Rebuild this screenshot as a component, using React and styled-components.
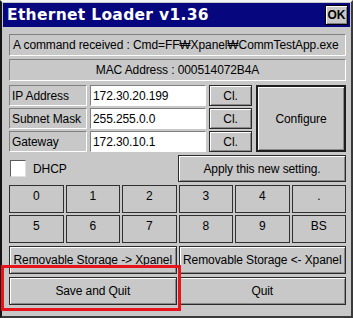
import React from 'react';
import styled, { createGlobalStyle } from 'styled-components';

const GlobalStyle = createGlobalStyle`
  html, body {
    margin: 0;
    padding: 0;
    background: #ffffff;
  }
  body {
    font-family: "Liberation Sans", Arial, sans-serif;
  }
`;

const KEYS = ['0', '1', '2', '3', '4', '.', '5', '6', '7', '8', '9', 'BS'];

const FIELDS = [
  { label: 'IP Address', value: '172.30.20.199' },
  { label: 'Subnet Mask', value: '255.255.0.0' },
  { label: 'Gateway', value: '172.30.10.1' },
];

const App = () => (
  <>
    <GlobalStyle />
    <Window>
      <TitleBar>
        <Title>Ethernet Loader v1.36</Title>
        <OkButton>OK</OkButton>
      </TitleBar>
      <Body>
        <InfoBox>A command received : Cmd=FF₩Xpanel₩CommTestApp.exe</InfoBox>
        <InfoBox center>MAC Address : 000514072B4A</InfoBox>

        <NetGrid>
          {FIELDS.map((f, i) => (
            <React.Fragment key={f.label}>
              <Label style={{ gridRow: i + 1 }}>{f.label}</Label>
              <Input style={{ gridRow: i + 1 }}>{f.value}</Input>
              <ClearButton style={{ gridRow: i + 1 }}>Cl.</ClearButton>
            </React.Fragment>
          ))}
          <ConfigureButton>Configure</ConfigureButton>
        </NetGrid>

        <DhcpRow>
          <CheckLabel>
            <CheckBox />
            DHCP
          </CheckLabel>
          <Button>Apply this new setting.</Button>
        </DhcpRow>

        <KeyPad>
          {KEYS.map(k => (
            <Key key={k}>{k}</Key>
          ))}
        </KeyPad>

        <TwoCols>
          <Button>Removable Storage -&gt; Xpanel</Button>
          <Button>Removable Storage &lt;- Xpanel</Button>
        </TwoCols>

        <TwoCols>
          <Highlighted>
            <Button>Save and Quit</Button>
          </Highlighted>
          <Button>Quit</Button>
        </TwoCols>
      </Body>
    </Window>
  </>
);

const Window = styled.div`
  width: 353px;
  height: 318px;
  box-sizing: border-box;
  background: #c8c8c8;
  border-left: 2px solid #141414;
  border-right: 2px solid #3a3a3a;
  border-bottom: 2px solid #3a3a3a;
  border-top: 2px solid #f4f4f4;
  padding: 1px 1px 0 1px;
  display: flex;
  flex-direction: column;
  font-size: 12px;
  letter-spacing: -0.1px;
  color: #000;
`;

const TitleBar = styled.div`
  height: 24px;
  background: #06067e;
  display: flex;
  align-items: center;
  justify-content: space-between;
  padding: 0 2px 0 4px;
`;

const Title = styled.div`
  font-family: "DejaVu Sans", Tahoma, sans-serif;
  color: #ffffff;
  font-weight: bold;
  font-size: 15.5px;
  letter-spacing: 0.3px;
`;

const OkButton = styled.div`
  width: 23px;
  height: 20px;
  box-sizing: border-box;
  background: #c8c8c8;
  border: 1px solid #000;
  box-shadow: inset 1px 1px #fff, inset -1px -1px #808080;
  font-weight: bold;
  font-size: 12px;
  letter-spacing: 0;
  display: flex;
  align-items: center;
  justify-content: center;
`;

const Body = styled.div`
  flex: 1;
  display: flex;
  flex-direction: column;
  gap: 3px;
  padding: 7px 4px 0 6px;
`;

const Sunken = styled.div`
  box-sizing: border-box;
  border-top: 1px solid #808080;
  border-left: 1px solid #808080;
  border-right: 1px solid #ffffff;
  border-bottom: 1px solid #ffffff;
  display: flex;
  align-items: center;
  white-space: nowrap;
  overflow: hidden;
`;

const InfoBox = styled(Sunken)`
  height: 22px;
  padding: 0 3px;
  justify-content: ${props => (props.center ? 'center' : 'flex-start')};
`;

const NetGrid = styled.div`
  display: grid;
  grid-template-columns: 78px 116px 43px 1fr;
  grid-template-rows: 21px 21px 21px;
  column-gap: 3px;
  row-gap: 2px;
  margin-top: 1px;
`;

const Label = styled(Sunken)`
  grid-column: 1;
  padding: 0 2px;
`;

const Input = styled(Sunken)`
  grid-column: 2;
  background: #ffffff;
  padding: 0 2px;
`;

const Button = styled.div`
  box-sizing: border-box;
  background: #c8c8c8;
  border: 1px solid #2a2a2a;
  box-shadow: inset 1px 1px #ffffff, inset -1px -1px #8a8a8a;
  display: flex;
  align-items: center;
  justify-content: center;
  white-space: nowrap;
  overflow: hidden;
`;

const ClearButton = styled(Button)`
  grid-column: 3;
`;

const ConfigureButton = styled(Button)`
  grid-column: 4;
  grid-row: 1 / span 3;
  margin-left: 1px;
  border: 2px solid #1e1e1e;
`;

const DhcpRow = styled.div`
  display: grid;
  grid-template-columns: 1fr 168px;
  height: 27px;
  column-gap: 2px;
`;

const CheckLabel = styled.div`
  display: flex;
  align-items: center;
  gap: 7px;
  padding-left: 1px;
`;

const CheckBox = styled.div`
  width: 16px;
  height: 17px;
  box-sizing: border-box;
  background: #ffffff;
  border-top: 1px solid #5a5a5a;
  border-left: 1px solid #5a5a5a;
  border-right: 1px solid #e0e0e0;
  border-bottom: 1px solid #e0e0e0;
`;

const KeyPad = styled.div`
  display: grid;
  grid-template-columns: repeat(6, 1fr);
  grid-auto-rows: 28px;
  gap: 2px;
`;

const Key = styled(Button)`
  align-items: flex-start;
  padding-top: 3px;
  box-shadow: none;
  border-color: #303030;
`;

const TwoCols = styled.div`
  display: grid;
  grid-template-columns: 1fr 1fr;
  height: 28px;
  column-gap: 2px;

  & > ${Button} {
    height: 100%;
  }
`;

const Highlighted = styled.div`
  position: relative;
  display: flex;

  & > ${Button} {
    flex: 1;
  }

  &::after {
    content: '';
    position: absolute;
    left: -8px;
    right: -4px;
    top: -12px;
    bottom: -6px;
    border: 3px solid #e8141c;
    pointer-events: none;
  }
`;

export default App;
